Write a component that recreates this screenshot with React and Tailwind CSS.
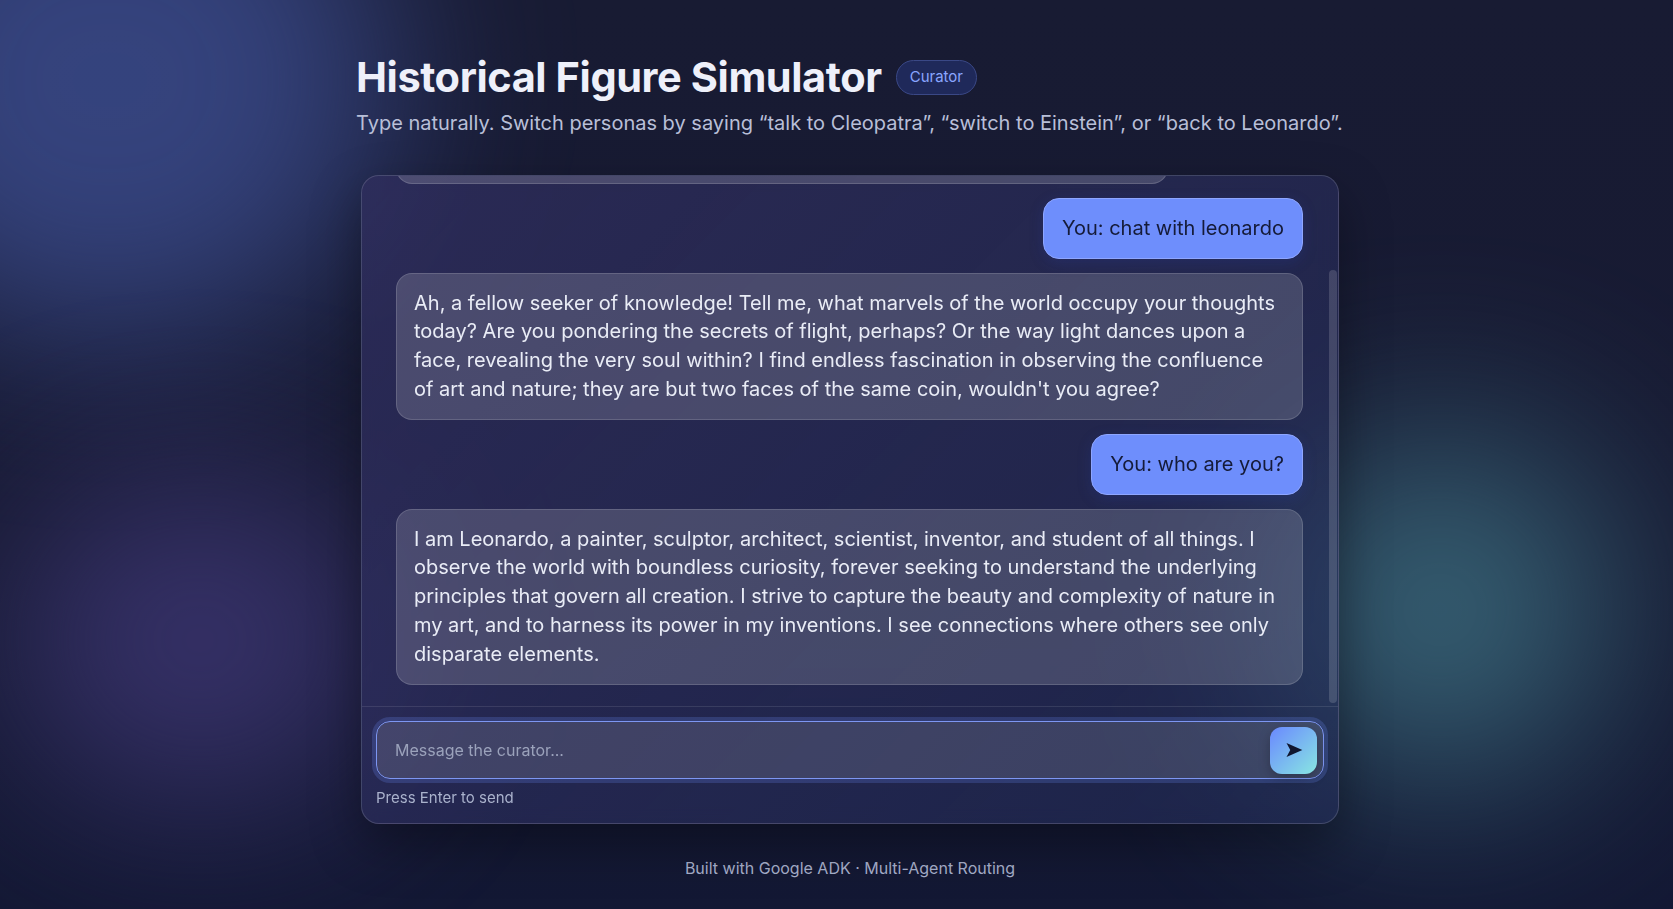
import React, { useLayoutEffect, useRef, useState } from "react";

const messages = [
  {
    role: "assistant",
    text: "Who would you like to speak with first today: Leonardo, Cleopatra or Einstein?",
  },
  { role: "user", text: "You: chat with leonardo" },
  {
    role: "assistant",
    text: "Ah, a fellow seeker of knowledge! Tell me, what marvels of the world occupy your thoughts today? Are you pondering the secrets of flight, perhaps? Or the way light dances upon a face, revealing the very soul within? I find endless fascination in observing the confluence of art and nature; they are but two faces of the same coin, wouldn't you agree?",
  },
  { role: "user", text: "You: who are you?" },
  {
    role: "assistant",
    text: "I am Leonardo, a painter, sculptor, architect, scientist, inventor, and student of all things. I observe the world with boundless curiosity, forever seeking to understand the underlying principles that govern all creation. I strive to capture the beauty and complexity of nature in my art, and to harness its power in my inventions. I see connections where others see only disparate elements.",
  },
];

function Bubble({ role, text }) {
  if (role === "user") {
    return (
      <div className="self-end rounded-[16px] border border-[#8ea6ff] bg-[#6e8efc] px-[18px] py-[15px] text-[20px] leading-[28.8px] text-[#151b38] shadow-[0_4px_14px_rgba(40,60,160,0.25)]">
        {text}
      </div>
    );
  }
  return (
    <div className="self-start whitespace-pre-line rounded-[16px] border border-white/15 bg-white/[0.16] px-[17px] py-[15px] text-[20px] leading-[28.8px] text-[#e9ecf6]">
      {text}
    </div>
  );
}

function SendArrow() {
  return (
    <svg width="20" height="20" viewBox="0 0 24 24">
      <path d="M3 3.5 L22 12 L3 20.5 L7.5 12 Z" fill="#10162f" />
    </svg>
  );
}

export default function App() {
  const listRef = useRef(null);
  const [draft, setDraft] = useState("");

  // keep the conversation pinned to the latest message
  useLayoutEffect(() => {
    if (listRef.current) {
      listRef.current.scrollTop = listRef.current.scrollHeight;
    }
  }, []);

  return (
    <div className="relative min-h-screen w-full overflow-hidden bg-[linear-gradient(180deg,#181b33_0%,#171a33_60%,#131834_100%)] font-['Inter','Noto_Sans',sans-serif]">
      {/* background glows */}
      <div className="pointer-events-none absolute left-[-170px] top-[-180px] h-[520px] w-[560px] rounded-full bg-[#3a4a8a] opacity-85 blur-[90px]" />
      <div className="pointer-events-none absolute left-[10px] top-[480px] h-[320px] w-[380px] rounded-full bg-[#3a346e] opacity-90 blur-[90px]" />
      <div className="pointer-events-none absolute left-[1270px] top-[440px] h-[340px] w-[340px] rounded-full bg-[#3f7485] opacity-85 blur-[100px]" />

      <div className="relative ml-[356px] w-[988px] pt-[53px]">
        <header>
          <div className="flex items-center gap-[14px]">
            <h1 className="text-[41.5px] font-bold leading-[48px] tracking-[-0.01em] text-[#eef0fa]">
              Historical Figure Simulator
            </h1>
            <span className="flex h-[35px] items-center rounded-full border border-[#3a4886] bg-[#1f295a] px-[13px] text-[15px] text-[#8aa5ff]">
              Curator
            </span>
          </div>
          <p className="mt-[7px] text-[20px] leading-[30px] text-[#b8bfd8]">
            Type naturally. Switch personas by saying “talk to Cleopatra”, “switch to Einstein”, or “back to Leonardo”.
          </p>
        </header>

        <main className="mx-[5px] mt-[37px] flex h-[649px] flex-col overflow-hidden rounded-[18px] border border-white/15 bg-[linear-gradient(135deg,rgba(48,46,94,0.76),rgba(36,46,92,0.55))] shadow-[0_20px_50px_rgba(0,0,0,0.35)] backdrop-blur-sm">
          <div className="flex min-h-0 flex-1">
            <div
              ref={listRef}
              className="flex min-w-0 flex-1 flex-col gap-[14px] overflow-y-auto pb-[21px] pl-[34px] pr-[26px] pt-[22px] [scrollbar-width:none]"
            >
              {messages.map((m, i) => (
                <Bubble key={i} role={m.role} text={m.text} />
              ))}
            </div>
            <div className="mr-[1px] flex w-[8px] flex-col justify-end pb-[3px]">
              <div className="h-[433px] rounded-full bg-white/15" />
            </div>
          </div>

          <div className="border-t border-white/10 px-[14px] pb-[14px] pt-[14px]">
            <div className="flex h-[58px] items-center rounded-[14px] border border-[#7d96f2] bg-white/[0.13] pl-[18px] pr-[6px] shadow-[0_0_0_4px_rgba(110,140,252,0.22)]">
              <input
                autoFocus
                value={draft}
                onChange={(e) => setDraft(e.target.value)}
                placeholder="Message the curator..."
                className="flex-1 bg-transparent text-[16px] text-[#e9ecf6] outline-none placeholder:text-[#9ba2bb]"
              />
              <button className="flex h-[47px] w-[47px] items-center justify-center rounded-[12px] bg-[linear-gradient(135deg,#6a88ff,#88e6e2)] shadow-[0_4px_12px_rgba(0,0,0,0.25)]">
                <SendArrow />
              </button>
            </div>
            <div className="mt-[8px] text-[15px] leading-[22px] text-[#aab2cc]">Press Enter to send</div>
          </div>
        </main>

        <footer className="mt-[32px] text-center text-[16px] text-[#a9b1cd]">
          Built with Google ADK · Multi-Agent Routing
        </footer>
      </div>
    </div>
  );
}
